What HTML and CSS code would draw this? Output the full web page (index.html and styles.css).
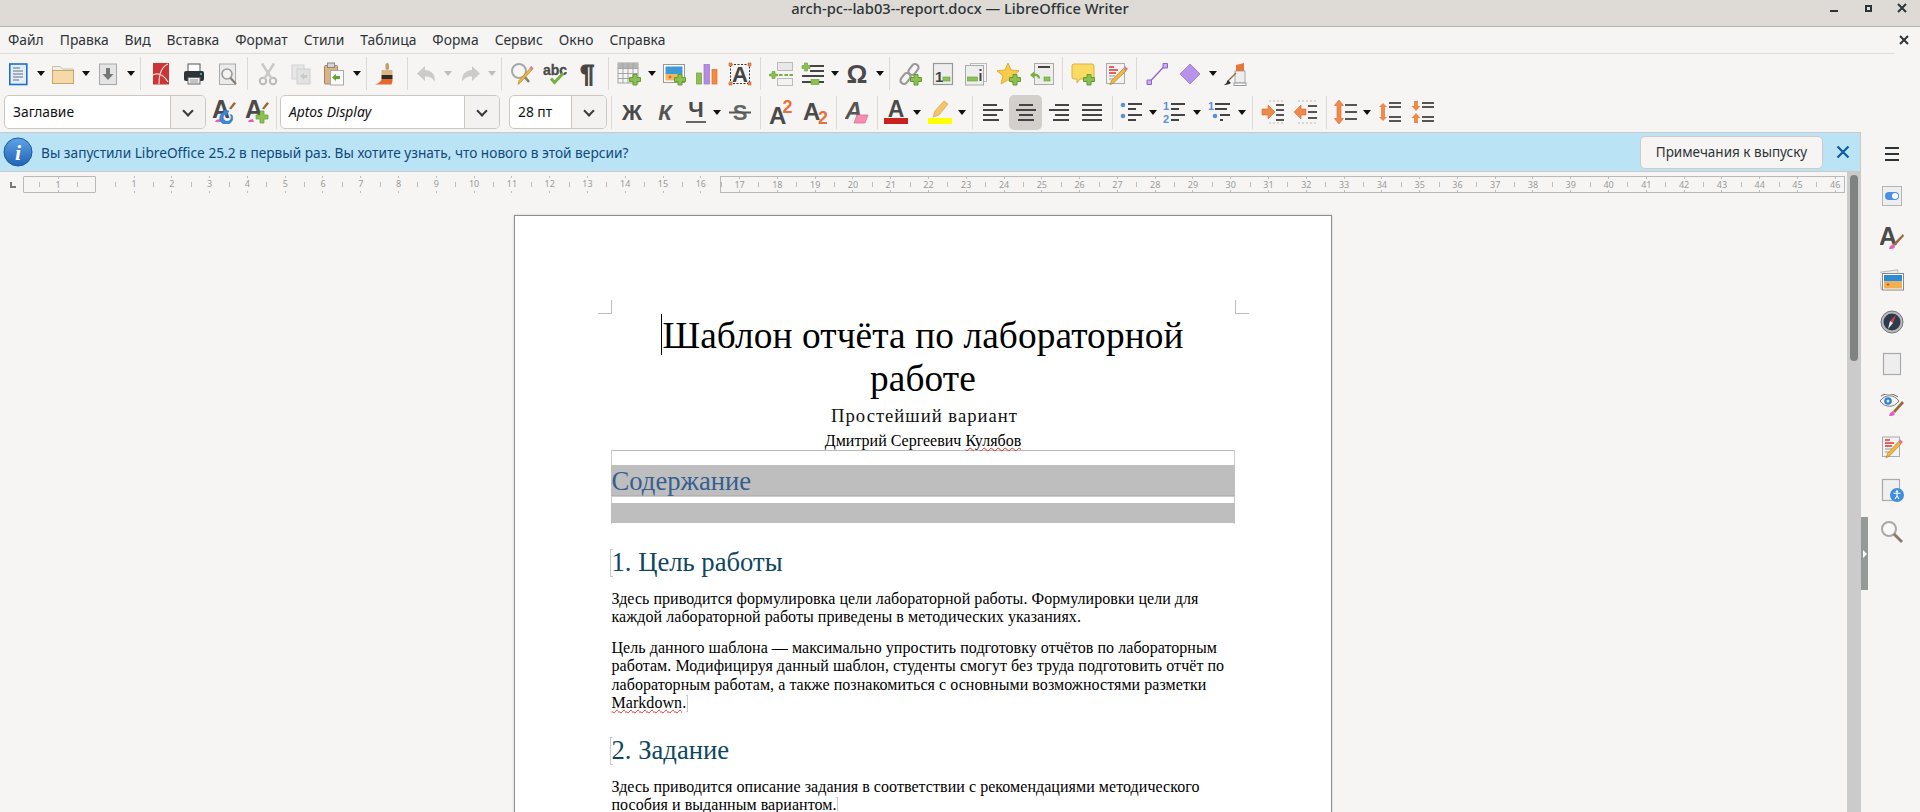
FILE: index.html
```html
<!DOCTYPE html>
<html lang="ru">
<head>
<meta charset="utf-8">
<title>arch-pc--lab03--report.docx — LibreOffice Writer</title>
<link rel="stylesheet" href="styles.css">
</head>
<body>
<svg class="sprite" width="0" height="0">
<defs>
<symbol id="plus" viewBox="0 0 24 24"><path d="M16 12.5h4v3h3.5v4H20v3.5h-4V19.500h-3.500v-4H16z" fill="#8cc152" stroke="#5f9e2f"/></symbol>
<symbol id="new" viewBox="0 0 24 24"><rect x="3.800" y="2" width="17" height="20.500" fill="#e3eefb" stroke="#1a6fd4" stroke-width="1.600"/><path d="M7 6h7M7 9h10M7 12h10M7 15h10M7 18h6" stroke="#8e9aa6" stroke-width="1.300"/></symbol>
<symbol id="open" viewBox="0 0 24 24"><path d="M1.500 9V4.500h8l2 2.500h11v2z" fill="#f1efe9" stroke="#c9c0ae"/><rect x="1.500" y="8.500" width="21" height="13" fill="#f5d9a8" stroke="#c8a56b"/></symbol>
<symbol id="save" viewBox="0 0 24 24"><rect x="3.500" y="2" width="17" height="20.500" fill="#e4e4e4" stroke="#a8a8a8"/><path d="M10 6h4v6h3.500L12 18l-5.500-6H10z" fill="#777"/></symbol>
<symbol id="pdf" viewBox="0 0 24 24"><rect x="4" y="1" width="16" height="21.500" fill="#cc3535"/><path d="M19 2C12 5 10 12 10 22M4 13c5-3 11 0 15 7" fill="none" stroke="#f6d5d5" stroke-width="1.200"/></symbol>
<symbol id="print" viewBox="0 0 24 24"><rect x="6" y="2" width="12" height="8" fill="#fff" stroke="#555"/><rect x="2" y="9" width="20" height="10" rx="2" fill="#2e3436"/><rect x="6" y="15.500" width="12" height="6.500" fill="#eee" stroke="#666"/><rect x="18" y="11" width="2" height="2" fill="#2ab"/><path d="M8 18h8M8 20h8" stroke="#999"/></symbol>
<symbol id="preview" viewBox="0 0 24 24"><rect x="4.500" y="2" width="16" height="20.500" fill="#ebebeb" stroke="#aaa"/><circle cx="12" cy="12" r="5" fill="#f2f2f2" stroke="#9a9a9a" stroke-width="1.600"/><path d="M15.500 16l5.500 6" stroke="#8c7b6c" stroke-width="2.200"/></symbol>
<symbol id="cut" viewBox="0 0 24 24"><circle cx="7" cy="19" r="3.200" fill="none" stroke="#b9b9b9" stroke-width="2"/><circle cx="17" cy="19" r="3.200" fill="none" stroke="#b9b9b9" stroke-width="2"/><path d="M8.500 16.500L18 1.500M15.500 16.500L6 1.500" stroke="#c8c8c8" stroke-width="2.500"/></symbol>
<symbol id="copy" viewBox="0 0 24 24"><rect x="3" y="3" width="12" height="14" fill="#e6e6e6" stroke="#d2d2d2"/><rect x="8" y="7" width="13" height="15" fill="#e2e2e2" stroke="#cfcfcf"/><path d="M11 14l4-3v2h3v3h-3v2z" fill="#c9c9c9"/></symbol>
<symbol id="paste" viewBox="0 0 24 24"><rect x="2.500" y="3.500" width="13" height="18.500" rx="1" fill="#d9b383" stroke="#a9855a"/><rect x="5.500" y="1" width="7" height="4.500" fill="#d5d5d5" stroke="#888"/><rect x="8.500" y="8.500" width="13" height="14.500" fill="#fafafa" stroke="#aaa"/><path d="M10 15.500l4-3.500v2h4v3h-4v2z" fill="#62a82f"/></symbol>
<symbol id="brush" viewBox="0 0 24 24"><rect x="10.500" y="1" width="3.500" height="7" rx="1.700" fill="#c39c6c"/><rect x="6.500" y="8" width="11" height="5" fill="#dcb682"/><rect x="6.500" y="13" width="11" height="4" fill="#2b2b2b"/><path d="M6.500 17h11v2l-1 3.500H0c3-1 5.500-2 6.500-5.500z" fill="#e8662a"/></symbol>
<symbol id="undo" viewBox="0 0 24 24"><path d="M10 4L2 11.500l8 7.500v-4.500c5 0 8 1.500 9.500 5.500C21 13 17 8.500 10 8z" fill="#cbcbcb"/></symbol>
<symbol id="redo" viewBox="0 0 24 24"><path d="M14 4l8 7.500-8 7.500v-4.500c-5 0-8 1.500-9.500 5.500C3 13 7 8.500 14 8z" fill="#cbcbcb"/></symbol>
<symbol id="find" viewBox="0 0 24 24"><circle cx="9" cy="9" r="7" fill="#f6f6f6" stroke="#a8a8a8" stroke-width="2"/><path d="M14 14l5 6" stroke="#8c7b6c" stroke-width="2.500"/><path d="M21.500 8.500L11 20l-3 2.500 1-4L20 6.500z" fill="#f0b840" stroke="#a87a20" stroke-width=".6"/><path d="M19.500 5.500l2-1.500 2 2.500-1.700 2z" fill="#e8709a"/></symbol>
<symbol id="spell" viewBox="0 0 24 24"><text x="0" y="13" class="svgt" font-size="14" font-weight="700" fill="#4a4a4a" stroke="#4a4a4a" stroke-width=".3">abc</text><path d="M8 16.500l3.500 4 9-9.500" fill="none" stroke="#77b041" stroke-width="3"/></symbol>
<symbol id="pil" viewBox="0 0 24 24"><text x="4" y="21" class="svgt" font-size="26" font-weight="700" fill="#444" stroke="#444" stroke-width=".8">¶</text></symbol>
<symbol id="table" viewBox="0 0 24 24"><rect x="1" y="1" width="20" height="20" fill="#f4f4f4" stroke="#a5a5a5"/><rect x="1" y="1" width="20" height="5" fill="#b5b5b5"/><path d="M1 6.500h20M1 11.500h20M1 16.500h20M6 1v20M11 1v20M16 1v20" stroke="#a5a5a5" fill="none"/></symbol>
<symbol id="image" viewBox="0 0 24 24"><rect x="1.500" y="2.500" width="21" height="18" fill="#fff" stroke="#999"/><rect x="3.500" y="4.500" width="17" height="7.500" fill="#3d9ad6"/><rect x="3.500" y="12" width="17" height="6.500" fill="#f0b860"/><path d="M8 13.500v3M6.500 15h3" stroke="#e05020"/></symbol>
<symbol id="chart" viewBox="0 0 24 24"><rect x="1.500" y="11" width="5" height="11" fill="#8cc152" stroke="#6f9f3a" stroke-width=".7"/><rect x="9" y="2.500" width="5.500" height="19.500" fill="#b48de0" stroke="#9b73cc" stroke-width=".7"/><rect x="17" y="7.500" width="5" height="14.500" fill="#f58a3c" stroke="#d96f25" stroke-width=".7"/></symbol>
<symbol id="textbox" viewBox="0 0 24 24"><rect x="2.500" y="2.500" width="19" height="19" fill="none" stroke="#333" stroke-dasharray="2 1.500"/><text x="12" y="20" text-anchor="middle" class="svgt" font-size="22" font-weight="700" fill="#444">A</text><path d="M1 1h3v3H1zM20 1h3v3h-3zM1 20h3v3H1zM20 20h3v3h-3z" fill="#ee8a55" stroke="#cc5a20" stroke-width=".6"/></symbol>
<symbol id="pbreak" viewBox="0 0 24 24"><rect x="8.500" y=".5" width="15" height="8" fill="#e8e8e8" stroke="#bbb"/><rect x="8.500" y="16.500" width="15" height="7" fill="#f2f2f2" stroke="#bbb"/><path d="M3 9.500h3v2.500h2.500v2H6v2.500H3V14H.5v-2H3z" fill="#8cc152" stroke="#5f9e2f" stroke-width=".6"/><path d="M10 13h3.500M15.500 13H19M20.500 13H24" stroke="#77b041" stroke-width="2"/></symbol>
<symbol id="field" viewBox="0 0 24 24"><path d="M9 4h14M9 9h14M1 14h22M1 20h22" stroke="#444" stroke-width="2"/><path d="M3.500 1h3v2.500H9v3H6.500V9h-3V6.500H1v-3h2.500z" fill="#8cc152" stroke="#5f9e2f" stroke-width=".6"/><rect x="10" y="17.500" width="8" height="5" fill="#8cc152" stroke="#5f9e2f" stroke-width=".6"/></symbol>
<symbol id="omega" viewBox="0 0 24 24"><text x="12" y="21" text-anchor="middle" class="svgt" font-size="26" font-weight="700" fill="#4a4a4a">Ω</text></symbol>
<symbol id="link" viewBox="0 0 24 24"><g fill="none" stroke="#9a9a9a" stroke-width="2.200"><rect x="12" y="1.500" width="7" height="12" rx="3.500" transform="rotate(38 15.500 7.500)"/><rect x="4" y="10.500" width="7" height="12" rx="3.500" transform="rotate(38 7.500 16.500)"/></g></symbol>
<symbol id="foot" viewBox="0 0 24 24"><rect x="2.500" y="1.500" width="19" height="21" fill="#eee" stroke="#999" stroke-width="1.200"/><text x="4" y="20" class="svgt" font-size="15" font-weight="700" fill="#444">1</text><rect x="12" y="15" width="7" height="4" fill="#8cc152" stroke="#5f9e2f" stroke-width=".6"/></symbol>
<symbol id="end" viewBox="0 0 24 24"><rect x="6.500" y="1.500" width="16" height="18" fill="#f4f4f4" stroke="#bbb"/><rect x="1.500" y="3.500" width="18" height="19.500" fill="#eee" stroke="#aaa"/><rect x="3.500" y="15" width="10" height="4" fill="#8cc152" stroke="#5f9e2f" stroke-width=".6"/><path d="M16.500 7v2M16.500 11v8" stroke="#444" stroke-width="2"/></symbol>
<symbol id="star" viewBox="0 0 24 24"><path d="M11 1l3 7 8 .8-6 5.200 2 8-7-4.200L4 22l2-8L0 8.800 8 8z" fill="#f8cb4c" stroke="#e0ad2c"/></symbol>
<symbol id="xref" viewBox="0 0 24 24"><rect x="4.500" y="1.500" width="19" height="21" fill="#eee" stroke="#aaa"/><path d="M8 5h12" stroke="#444" stroke-width="2"/><rect x="14" y="15" width="6" height="4" fill="#8cc152" stroke="#5f9e2f" stroke-width=".6"/><path d="M0 13l4-3.500v2c3 0 6 1 6 5h-2c0-2-2-2.500-4-2.500v2.500z" fill="#77b041"/></symbol>
<symbol id="comment" viewBox="0 0 24 24"><path d="M3 2h18a2 2 0 0 1 2 2v11a2 2 0 0 1-2 2H9l-3 4v-4H3a2 2 0 0 1-2-2V4a2 2 0 0 1 2-2z" fill="#fbdc63" stroke="#d9b04a"/></symbol>
<symbol id="track" viewBox="0 0 24 24"><rect x="2.500" y="1.500" width="18" height="20" fill="#f2f2f2" stroke="#aaa"/><path d="M5 5h5M5 8h9M5 11h7" stroke="#d33" stroke-width="1.300"/><path d="M5 14h6M5 17h4" stroke="#999"/><path d="M22 9L10 20.500l-4 2.500 1.500-4.500L19.500 6.500z" fill="#f0b840" stroke="#a87a20" stroke-width=".6"/><path d="M19.500 6l2-1.500 2.500 2.500-2 2z" fill="#e8709a"/></symbol>
<symbol id="line" viewBox="0 0 24 24"><path d="M4.500 20L19.500 4" stroke="#8e63cc" stroke-width="1.300"/><path d="M2 18h4.500v4.500H2zM18 1.500h4.500V6H18z" fill="#c9aef0" stroke="#8e63cc"/></symbol>
<symbol id="diamond" viewBox="0 0 24 24"><path d="M12 2l10 10-10 10L2 12z" fill="#b992ea" stroke="#a882dc"/></symbol>
<symbol id="draw" viewBox="0 0 24 24"><rect x="12" y="9" width="10" height="12" fill="#eee" stroke="#aaa"/><path d="M13 3l8-2v8h-8z" fill="#e8753a"/><rect x="11" y="21" width="12" height="2.500" fill="#fff" stroke="#999"/><path d="M13 11l-9 9" stroke="#8b6c4c" stroke-width="1.300"/><path d="M5 18l3 3c-2 1.500-5 2-7 2 2-1 3-3 4-5z" fill="#333"/></symbol>
<symbol id="updstyle" viewBox="0 0 24 24"><text x="0" y="18" class="svgt" font-size="25" font-weight="700" fill="#4a4a4a">A</text><path d="M22 2l2 1.500-5 6-2-1z" fill="#9a6a3a"/><path d="M4 20l4-1 1 3H3z" fill="#e060c0"/><path d="M20 15a6.500 6.500 0 1 1-8-3l-1-2 6 1-3 5-1-2a4 4 0 1 0 5 .5z" fill="#3c88d8" stroke="#2a6cb8" stroke-width=".5"/></symbol>
<symbol id="newstyle" viewBox="0 0 24 24"><text x="0" y="18" class="svgt" font-size="25" font-weight="700" fill="#4a4a4a">A</text><path d="M22 2l2 1.500-5 6-2-1z" fill="#9a6a3a"/><path d="M4 20l4-1 1 3H3z" fill="#e060c0"/><path d="M15 11h4v4h4v4h-4v4h-4v-4h-4v-4h4z" fill="#8cc152" stroke="#5f9e2f" stroke-width=".7"/></symbol>
<symbol id="bold" viewBox="0 0 24 24"><text x="12" y="20" text-anchor="middle" class="svgt" font-size="22" font-weight="700" fill="#4a4a4a">Ж</text></symbol>
<symbol id="ital" viewBox="0 0 24 24"><text x="12" y="20" text-anchor="middle" class="svgt" font-size="22" font-weight="700" font-style="italic" fill="#555">К</text></symbol>
<symbol id="under" viewBox="0 0 24 24"><text x="12" y="17" text-anchor="middle" class="svgt" font-size="22" font-weight="700" fill="#4a4a4a">Ч</text><path d="M2 22h20" stroke="#666" stroke-width="2"/></symbol>
<symbol id="strike" viewBox="0 0 24 24"><text x="12" y="20" text-anchor="middle" class="svgt" font-size="22" font-weight="700" fill="#666">S</text><path d="M1 12.500h22" stroke="#555" stroke-width="2"/></symbol>
<symbol id="sup" viewBox="0 0 24 24"><text x="0" y="24" class="svgt" font-size="24" font-weight="700" fill="#4a4a4a">A</text><text x="13.500" y="13" class="svgt" font-size="18" font-weight="700" fill="#e8703a">2</text></symbol>
<symbol id="sub" viewBox="0 0 24 24"><text x="0" y="20" class="svgt" font-size="24" font-weight="700" fill="#4a4a4a">A</text><text x="15" y="24" class="svgt" font-size="18" font-weight="700" fill="#e8703a">2</text></symbol>
<symbol id="clear" viewBox="0 0 24 24"><text x="0" y="19" class="svgt" font-size="24" font-weight="700" font-style="italic" fill="#555">A</text><path d="M12 15h11l-3 8H9z" fill="#f48fb1" stroke="#d9658d" stroke-width=".7"/></symbol>
<symbol id="fcolor" viewBox="0 0 24 24"><text x="12" y="17" text-anchor="middle" class="svgt" font-size="23" font-weight="700" fill="#4a4a4a">A</text><rect x="0" y="18" width="24" height="6" fill="#c9211e"/></symbol>
<symbol id="hcolor" viewBox="0 0 24 24"><path d="M16 1l4 3-9 11-6 2 2-6z" fill="#f3c46a" stroke="#d9a040" stroke-width=".7"/><rect x="0" y="18" width="24" height="6" fill="#ffff00"/></symbol>
<symbol id="al" viewBox="0 0 24 24"><path d="M2 5h14M2 10h20M2 15h14M2 20h16" stroke="#444" stroke-width="2.200"/></symbol>
<symbol id="ac" viewBox="0 0 24 24"><path d="M5 5h14M2 10h20M5 15h14M4 20h16" stroke="#444" stroke-width="2.200"/></symbol>
<symbol id="ar" viewBox="0 0 24 24"><path d="M8 5h14M2 10h20M8 15h14M6 20h16" stroke="#444" stroke-width="2.200"/></symbol>
<symbol id="aj" viewBox="0 0 24 24"><path d="M2 5h20M2 10h20M2 15h20M2 20h20" stroke="#444" stroke-width="2.200"/></symbol>
<symbol id="bul" viewBox="0 0 24 24"><circle cx="3" cy="5" r="2.300" fill="#5b8fd6"/><circle cx="3" cy="16" r="2.300" fill="#5b8fd6"/><path d="M8 4h14M8 9h8M8 15h14M8 20h8" stroke="#444" stroke-width="2"/></symbol>
<symbol id="num" viewBox="0 0 24 24"><text x="0" y="10" class="svgt" font-size="11" font-weight="700" fill="#5b8fd6">1</text><text x="0" y="23" class="svgt" font-size="11" font-weight="700" fill="#5b8fd6">2</text><path d="M8 4h14M8 9h8M8 15h14M8 20h8" stroke="#444" stroke-width="2"/></symbol>
<symbol id="outl" viewBox="0 0 24 24"><text x="0" y="10" class="svgt" font-size="11" font-weight="700" fill="#5b8fd6">1</text><circle cx="7" cy="16" r="2.300" fill="#5b8fd6"/><path d="M7 4h15M7 9h12M12 15h10M12 20h3" stroke="#444" stroke-width="2"/></symbol>
<symbol id="indinc" viewBox="0 0 24 24"><path d="M1 9h6V5l7 7-7 7v-4H1z" fill="#f08a4b" stroke="#d9652a" stroke-width=".6"/><path d="M15 5h8M15 10h8M15 15h8M15 20h8" stroke="#555" stroke-width="2"/><path d="M8 1h14M8 23h14" stroke="#bbb" stroke-dasharray="2 2"/></symbol>
<symbol id="inddec" viewBox="0 0 24 24"><path d="M12 9H7V5l-7 7 7 7v-4h5z" fill="#f08a4b" stroke="#d9652a" stroke-width=".6"/><path d="M14 6h9M14 12h9M14 18h9" stroke="#555" stroke-width="2"/><path d="M4 1h18M4 23h18" stroke="#bbb" stroke-dasharray="2 2"/></symbol>
<symbol id="lsp" viewBox="0 0 24 24"><path d="M5 0l4.500 5.500H7v13h2.500L5 24 .5 18.500H3v-13H.5z" fill="#f08a4b" stroke="#d9652a" stroke-width=".6"/><path d="M11 5h12M11 12h12M11 19h12" stroke="#555" stroke-width="2.200"/></symbol>
<symbol id="pinc" viewBox="0 0 24 24"><path d="M5 3L1 7h8zM3 7h4v10H3zM1 17h8l-4 4z" fill="#f08a4b"/><path d="M11 3h12M11 7h12M11 17h12M11 21h12" stroke="#555" stroke-width="2"/></symbol>
<symbol id="pdec" viewBox="0 0 24 24"><path d="M3 1h4v5h2.500L5 11 .5 6H3zM5 13l4.500 5H7v5H3v-5H.5z" fill="#f08a4b"/><path d="M11 3h12M11 7h12M11 17h12M11 21h12" stroke="#555" stroke-width="2"/></symbol>
<symbol id="s-prop" viewBox="0 0 24 24"><rect x="2.500" y="2.500" width="19" height="19" fill="#eee" stroke="#b5b5b5"/><rect x="5" y="8" width="14" height="8" rx="4" fill="#4a90e2"/><circle cx="15" cy="12" r="3" fill="#fff"/></symbol>
<symbol id="s-style" viewBox="0 0 24 24"><text x="-1" y="19" class="svgt" font-size="25" font-weight="700" fill="#4a4a4a">A</text><path d="M24 10l-9 10-2-2 10-10z" fill="#9a6a3a"/><path d="M10 20l4-2 1 3c-1 2-3 2-6 2z" fill="#e060c0"/></symbol>
<symbol id="s-gal" viewBox="0 0 24 24"><rect x="0" y="3" width="19" height="17" fill="#eee" stroke="#bbb" transform="rotate(-8 10 12)"/><rect x="2.500" y="5.500" width="21" height="16.500" fill="#fff" stroke="#888"/><rect x="4" y="7" width="18" height="6.500" fill="#2f8ccc"/><rect x="4" y="13.500" width="18" height="7" fill="#f0b050"/><path d="M8 15v3M6.500 16.500h3" stroke="#e05020"/></symbol>
<symbol id="s-nav" viewBox="0 0 24 24"><circle cx="12" cy="12" r="11" fill="#b9b9b9" stroke="#777"/><circle cx="12" cy="12" r="8.500" fill="#2e3a4e"/><path d="M16 5l-3 8-3-2z" fill="#e04040"/><path d="M8 19l2-8 3 2z" fill="#eee"/></symbol>
<symbol id="s-page" viewBox="0 0 24 24"><rect x="3.500" y="1.500" width="17" height="21" fill="#eee" stroke="#aaa" stroke-width="1.200"/></symbol>
<symbol id="s-insp" viewBox="0 0 24 24"><path d="M0 7c5-7 14-7 19 0-5 7-14 7-19 0z" fill="#f4f4f4" stroke="#777"/><path d="M1 2c5-3 12-3 17 1" fill="none" stroke="#666"/><circle cx="8" cy="7" r="3.800" fill="#2f7fd6"/><circle cx="8" cy="7" r="1.500" fill="#dcecff"/><path d="M24 9l-9 10-2-2 9-10z" fill="#9a6a3a"/><path d="M10 19l3-2 2 3c-1 2-4 2-6 2z" fill="#e060c0"/></symbol>
<symbol id="s-man" viewBox="0 0 24 24"><rect x="2.500" y="1" width="17" height="19.500" fill="#f2f2f2" stroke="#aaa"/><path d="M5 4h5M5 7h9M5 10h7" stroke="#d33" stroke-width="1.300"/><path d="M5 13h7M5 16h4" stroke="#999"/><path d="M21 8L10 19.500 6 22l1.500-4.500L18.500 5.500z" fill="#f0b840" stroke="#a87a20" stroke-width=".6"/><path d="M18.500 5l2-1.500 2.500 2.500-2 2z" fill="#e8709a"/></symbol>
<symbol id="s-acc" viewBox="0 0 24 24"><rect x="2.500" y="1.500" width="17" height="21" fill="#f0f0f0" stroke="#aaa" stroke-width="1.200"/><circle cx="17" cy="17" r="7" fill="#3f8fe0"/><circle cx="17" cy="13.500" r="1.200" fill="#fff"/><path d="M13.500 15.200h7M17 15.500v3M17 18l-2 3M17 18l2 3" stroke="#fff" stroke-width="1.100" fill="none"/></symbol>
<symbol id="s-find" viewBox="0 0 24 24"><circle cx="9" cy="9" r="7" fill="#f8f8f8" stroke="#a8a8a8" stroke-width="2"/><path d="M14 14l8 8" stroke="#8c7b6c" stroke-width="3"/></symbol>
</defs>
</svg>

<header class="titlebar">
  <span class="title">arch-pc--lab03--report.docx — LibreOffice Writer</span>
  <span class="winbtns">
    <span class="wmin"></span>
    <span class="wmax"></span>
    <svg class="wclose" viewBox="0 0 10 10"><path d="M1 1l8 8M9 1l-8 8"/></svg>
  </span>
</header>

<div class="menubar">
  <nav class="menulist">
    <span class="mi">Файл</span><span class="mi">Правка</span><span class="mi">Вид</span><span class="mi">Вставка</span><span class="mi">Формат</span><span class="mi">Стили</span><span class="mi">Таблица</span><span class="mi">Форма</span><span class="mi">Сервис</span><span class="mi">Окно</span><span class="mi">Справка</span>
  </nav>
  <svg class="mclose" viewBox="0 0 10 10"><path d="M1 1l8 8M9 1l-8 8"/></svg>
</div>

<div class="toolbar tb1">
  <span class="b"><svg class="i"><use href="#new"/></svg></span><span class="c"></span>
  <span class="b"><svg class="i"><use href="#open"/></svg></span><span class="c"></span>
  <span class="b"><svg class="i"><use href="#save"/></svg></span><span class="c"></span>
  <span class="s"></span>
  <span class="b"><svg class="i"><use href="#pdf"/></svg></span>
  <span class="b"><svg class="i"><use href="#print"/></svg></span>
  <span class="b"><svg class="i"><use href="#preview"/></svg></span>
  <span class="s"></span>
  <span class="b"><svg class="i"><use href="#cut"/></svg></span>
  <span class="b"><svg class="i"><use href="#copy"/></svg></span>
  <span class="b"><svg class="i"><use href="#paste"/></svg></span><span class="c"></span>
  <span class="s"></span>
  <span class="b"><svg class="i"><use href="#brush"/></svg></span>
  <span class="s"></span>
  <span class="b w30"><svg class="i"><use href="#undo"/></svg></span><span class="c off"></span>
  <span class="b w32"><svg class="i"><use href="#redo"/></svg></span><span class="c off"></span>
  <span class="s"></span>
  <span class="b"><svg class="i"><use href="#find"/></svg></span>
  <span class="b"><svg class="i"><use href="#spell"/></svg></span>
  <span class="b"><svg class="i"><use href="#pil"/></svg></span>
  <span class="s"></span>
  <span class="b"><span class="stack"><svg class="i"><use href="#table"/></svg><svg class="i over"><use href="#plus"/></svg></span></span><span class="c"></span>
  <span class="b"><span class="stack"><svg class="i"><use href="#image"/></svg><svg class="i over"><use href="#plus"/></svg></span></span>
  <span class="b"><svg class="i"><use href="#chart"/></svg></span>
  <span class="b"><svg class="i"><use href="#textbox"/></svg></span>
  <span class="s"></span>
  <span class="b"><svg class="i"><use href="#pbreak"/></svg></span>
  <span class="b w31"><svg class="i"><use href="#field"/></svg></span><span class="c"></span>
  <span class="b"><svg class="i"><use href="#omega"/></svg></span><span class="c"></span>
  <span class="s"></span>
  <span class="b"><span class="stack"><svg class="i"><use href="#link"/></svg><svg class="i over"><use href="#plus"/></svg></span></span>
  <span class="b"><svg class="i"><use href="#foot"/></svg></span>
  <span class="b"><svg class="i"><use href="#end"/></svg></span>
  <span class="b"><span class="stack"><svg class="i"><use href="#star"/></svg><svg class="i over"><use href="#plus"/></svg></span></span>
  <span class="b"><svg class="i"><use href="#xref"/></svg></span>
  <span class="s"></span>
  <span class="b"><span class="stack"><svg class="i"><use href="#comment"/></svg><svg class="i over"><use href="#plus"/></svg></span></span>
  <span class="b"><svg class="i"><use href="#track"/></svg></span>
  <span class="s"></span>
  <span class="b"><svg class="i"><use href="#line"/></svg></span>
  <span class="b"><svg class="i"><use href="#diamond"/></svg></span><span class="c"></span>
  <span class="b"><svg class="i"><use href="#draw"/></svg></span>
</div>

<div class="toolbar tb2">
  <span class="combo cstyle"><span class="ctext">Заглавие</span><span class="cbtn"></span></span>
  <span class="b"><svg class="i"><use href="#updstyle"/></svg></span>
  <span class="b"><svg class="i"><use href="#newstyle"/></svg></span>
  <span class="s sn"></span>
  <span class="combo cfont"><span class="ctext fi">Aptos Display</span><span class="cbtn"></span></span>
  <span class="combo csize"><span class="ctext">28 пт</span><span class="cbtn"></span></span>
  <span class="s"></span>
  <span class="b"><svg class="i"><use href="#bold"/></svg></span>
  <span class="b"><svg class="i"><use href="#ital"/></svg></span>
  <span class="b w30"><svg class="i"><use href="#under"/></svg></span><span class="c"></span>
  <span class="b"><svg class="i"><use href="#strike"/></svg></span>
  <span class="s"></span>
  <span class="b"><svg class="i"><use href="#sup"/></svg></span>
  <span class="b w35"><svg class="i"><use href="#sub"/></svg></span>
  <span class="s"></span>
  <span class="b"><svg class="i"><use href="#clear"/></svg></span>
  <span class="s"></span>
  <span class="b w30"><svg class="i"><use href="#fcolor"/></svg></span><span class="c"></span>
  <span class="b"><svg class="i"><use href="#hcolor"/></svg></span><span class="c"></span>
  <span class="s"></span>
  <span class="b"><svg class="i"><use href="#al"/></svg></span>
  <span class="b active"><svg class="i"><use href="#ac"/></svg></span>
  <span class="b"><svg class="i"><use href="#ar"/></svg></span>
  <span class="b"><svg class="i"><use href="#aj"/></svg></span>
  <span class="s"></span>
  <span class="b w31"><svg class="i"><use href="#bul"/></svg></span><span class="c"></span>
  <span class="b w32"><svg class="i"><use href="#num"/></svg></span><span class="c"></span>
  <span class="b"><svg class="i"><use href="#outl"/></svg></span><span class="c"></span>
  <span class="s"></span>
  <span class="b"><svg class="i"><use href="#indinc"/></svg></span>
  <span class="b"><svg class="i"><use href="#inddec"/></svg></span>
  <span class="s"></span>
  <span class="b w31"><svg class="i"><use href="#lsp"/></svg></span><span class="c"></span>
  <span class="b"><svg class="i"><use href="#pinc"/></svg></span>
  <span class="b"><svg class="i"><use href="#pdec"/></svg></span>
</div>

<div class="workarea">
  <div class="editor">
    <div class="infobar">
      <svg class="infoicon" viewBox="0 0 30 30"><defs><linearGradient id="ig" x1="0" y1="0" x2="0" y2="1"><stop offset="0" stop-color="#5fa4e6"/><stop offset="1" stop-color="#1f63b4"/></linearGradient></defs><circle cx="15" cy="15" r="14" fill="url(#ig)" stroke="#1c5aa5"/><text x="15" y="23" text-anchor="middle" class="infoi">i</text></svg>
      <span class="infotext">Вы запустили LibreOffice 25.2 в первый раз. Вы хотите узнать, что нового в этой версии?</span>
      <button class="infobtn">Примечания к выпуску</button>
      <svg class="infoclose" viewBox="0 0 14 14"><path d="M1.500 1.500l11 11M12.500 1.500l-11 11"/></svg>
    </div>
    <div class="editbody">
      <div class="editmain">
        <div class="ruler">
          <span class="tabcell"><span class="tabmark"></span></span>
          <div class="rbox rleft"><span class="rc">1</span><span class="rc"></span></div>
          <span class="rgap"></span>
          <span class="rc">1</span><span class="rc">2</span><span class="rc">3</span><span class="rc">4</span><span class="rc">5</span><span class="rc">6</span><span class="rc">7</span><span class="rc">8</span><span class="rc">9</span><span class="rc">10</span><span class="rc">11</span><span class="rc">12</span><span class="rc">13</span><span class="rc">14</span><span class="rc">15</span><span class="rc">16</span>
          <div class="rbox rright"><span class="rc">17</span><span class="rc">18</span><span class="rc">19</span><span class="rc">20</span><span class="rc">21</span><span class="rc">22</span><span class="rc">23</span><span class="rc">24</span><span class="rc">25</span><span class="rc">26</span><span class="rc">27</span><span class="rc">28</span><span class="rc">29</span><span class="rc">30</span><span class="rc">31</span><span class="rc">32</span><span class="rc">33</span><span class="rc">34</span><span class="rc">35</span><span class="rc">36</span><span class="rc">37</span><span class="rc">38</span><span class="rc">39</span><span class="rc">40</span><span class="rc">41</span><span class="rc">42</span><span class="rc">43</span><span class="rc">44</span><span class="rc">45</span><span class="rc">46</span></div>
        </div>
        <div class="docarea">
          <article class="page">
            <span class="crop tl"></span>
            <span class="crop tr"></span>
            <h1 class="doctitle"><span class="cursor"></span>Шаблон отчёта по лабораторной работе</h1>
            <p class="subtitle">Простейший вариант</p>
            <p class="author">Дмитрий Сергеевич <span class="sq">Кулябов</span></p>
            <div class="tocframe">
              <div class="tocgray"><span class="tochead">Содержание</span></div>
              <div class="tocgap"></div>
              <div class="tocfill"></div>
            </div>
            <h2 class="hd"><span class="fm"></span>1. Цель работы</h2>
            <p class="para">Здесь приводится формулировка цели лабораторной работы. Формулировки цели для каждой лабораторной работы приведены в методических указаниях.</p>
            <p class="para">Цель данного шаблона — максимально упростить подготовку отчётов по лабораторным работам. Модифицируя данный шаблон, студенты смогут без труда подготовить отчёт по лабораторным работам, а также познакомиться с основными возможностями разметки <span class="sq">Markdown</span>.<span class="fe"></span></p>
            <h2 class="hd h2b"><span class="fm"></span>2. Задание</h2>
            <p class="para">Здесь приводится описание задания в соответствии с рекомендациями методического пособия и выданным вариантом.<span class="fe"></span></p>
          </article>
        </div>
      </div>
      <div class="vscroll"><span class="thumb"></span></div>
    </div>
  </div>
  <aside class="sidebar">
    <span class="handle"></span>
    <div class="burger"><span></span><span></span><span></span></div>
    <span class="sb"><svg class="i"><use href="#s-prop"/></svg></span>
    <span class="sb"><svg class="i"><use href="#s-style"/></svg></span>
    <span class="sb"><svg class="i"><use href="#s-gal"/></svg></span>
    <span class="sb"><svg class="i"><use href="#s-nav"/></svg></span>
    <span class="sb"><svg class="i"><use href="#s-page"/></svg></span>
    <span class="sb"><svg class="i"><use href="#s-insp"/></svg></span>
    <span class="sb"><svg class="i"><use href="#s-man"/></svg></span>
    <span class="sb"><svg class="i"><use href="#s-acc"/></svg></span>
    <span class="sb"><svg class="i"><use href="#s-find"/></svg></span>
  </aside>
</div>
</body>
</html>
```

FILE: styles.css
```css
* { box-sizing: border-box; }
html, body { margin: 0; height: 812px; overflow: hidden; }
body {
  display: flex; flex-direction: column;
  background: #f6f5f4; color: #2e3436;
  font-family: "Noto Sans", "Open Sans", sans-serif; font-size: 13.700px;
}
.sprite { position: absolute; }
.svgt { font-family: "Liberation Sans", sans-serif; }

.titlebar {
  flex: none; height: 27px; background: #dedbd7; border-bottom: 1px solid #b6b3ae;
  display: flex; align-items: center; justify-content: center; position: relative;
}
.title { font-size: 14.700px; font-weight: 500; color: #2e3436; margin-top: -10px; }
.winbtns { position: absolute; right: 0; top: 0; width: 100px; height: 26px; }
.wmin { position: absolute; left: 10px; top: 10px; width: 8px; height: 2px; background: #2e3436; }
.wmax { position: absolute; left: 45px; top: 5px; width: 7px; height: 7px; border: 2px solid #2e3436; }
.wclose { position: absolute; left: 77px; top: 3px; width: 10px; height: 10px; }
.wclose path, .mclose path { stroke: #2e3436; stroke-width: 2; fill: none; }

.menubar { flex: none; height: 27px; display: flex; align-items: center; }
.menulist {
  display: flex; align-items: center; height: 27px; width: 1895px;
  border-bottom: 1px solid #dfdcd8; padding-left: 0;
}
.mi { padding: 0 8px; line-height: 26px; font-size: 13.850px; }
.mclose { width: 10px; height: 10px; margin-left: 4px; margin-top: -1px; }

.toolbar { flex: none; display: flex; align-items: center; height: 39px; padding-left: 1.5px; }
.tb2 { padding-left: 4px; padding-bottom: 1px; }
.b { flex: none; width: 33px; height: 35px; display: flex; align-items: center; justify-content: center; border-radius: 5px; }
.w30 { width: 30px; }
.w31 { width: 31px; }
.w32 { width: 32px; }
.w35 { width: 35px; }
.active { background: #d3cfca; }
.i { width: 24px; height: 24px; display: block; overflow: visible; }
.stack { position: relative; width: 24px; height: 24px; display: block; }
.over { position: absolute; left: 0; top: 0; }
.c { flex: none; width: 12px; height: 20px; display: flex; align-items: center; justify-content: center; }
.c::after { content: ""; border-left: 4px solid transparent; border-right: 4px solid transparent; border-top: 5px solid #111; }
.c.off::after { border-top-color: #bdbdbd; }
.s { flex: none; width: 8px; height: 33px; display: flex; justify-content: center; }
.s::after { content: ""; width: 1px; background: #dcd9d5; }
.sn { width: 7px; }

.combo {
  flex: none; height: 34px; display: flex; background: #fff;
  border: 1px solid #cdc7c2; border-radius: 5px; overflow: hidden;
}
.cstyle { width: 202px; margin-right: 1px; }
.cfont { width: 220px; margin-right: 9px; }
.csize { width: 98px; }
.ctext { flex: 1; padding-left: 8px; line-height: 32px; font-size: 13.800px; color: #111; white-space: nowrap; }
.fi { font-style: italic; }
.cbtn {
  flex: none; width: 35px; border-left: 1px solid #cdc7c2; background: #f3f2f0;
  display: flex; align-items: center; justify-content: center;
}
.cbtn::after {
  content: ""; width: 6px; height: 6px; border-right: 2px solid #3a3a3a; border-bottom: 2px solid #3a3a3a;
  transform: rotate(45deg); margin-top: -3px;
}

.workarea { flex: 1; display: flex; min-height: 0; }
.editor { flex: none; width: 1861px; display: flex; flex-direction: column; }
.infobar {
  flex: none; height: 40px; background: #bbe3f6; display: flex; align-items: center;
  border-top: 1px solid #c9c9c9; border-bottom: 1px solid #c9c9c9; border-right: 1px solid #c9c9c9;
  padding-left: 3px;
}
.infoicon { width: 30px; height: 30px; flex: none; }
.infoi { font-family: "Liberation Serif", serif; font-style: italic; font-weight: 700; font-size: 22px; fill: #fff; }
.infotext { margin-left: 8px; flex: 1; color: #0f4a7a; font-size: 13.700px; white-space: nowrap; }
.infobtn {
  flex: none; width: 183px; height: 33px; margin-right: 13px; padding: 0;
  border: 1px solid #cfcac5; border-radius: 5px; background: #f6f5f4; color: #2e3436;
  font: inherit; font-size: 13.500px;
}
.infoclose { width: 14px; height: 14px; flex: none; margin-right: 10px; }
.infoclose path { stroke: #0e5a9b; stroke-width: 2.200; fill: none; }

.editbody { flex: 1; display: flex; min-height: 0; }
.editmain { flex: 1; display: flex; flex-direction: column; min-width: 0; }
.ruler { flex: none; height: 24px; padding-top: 4px; display: flex; align-items: flex-start; }
.tabcell { flex: none; width: 22.500px; height: 17px; position: relative; }
.tabmark { position: absolute; left: 10px; top: 6px; width: 6px; height: 6px; border-left: 2px solid #777; border-bottom: 2px solid #777; }
.rbox { flex: none; height: 17px; display: flex; border: 1px solid #b9b9b9; overflow: hidden; }
.rleft { width: 73.800px; padding-left: 15.800px; border-radius: 1px; }
.rgap { flex: none; width: 18.900px; }
.rright { width: 1125px; }
.rc {
  flex: none; width: 37.795px; height: 17px; text-align: center; line-height: 16px;
  font-family: "Noto Sans", sans-serif; font-size: 9px; color: #9a9a9a;
  background:
    linear-gradient(#bbb, #bbb) 0 50% / 1px 5px no-repeat,
    linear-gradient(#bbb, #bbb) 50% 0 / 1px 2px no-repeat,
    linear-gradient(#bbb, #bbb) 50% 100% / 1px 2px no-repeat;
}
.rbox .rc { height: 15px; line-height: 15px; }

.docarea { flex: 1; min-height: 0; display: flex; justify-content: center; padding: 19px 2px 0 0; overflow: hidden; }
.page {
  flex: none; width: 818px; height: 1056px; position: relative; background: #fff;
  border: 1px solid #8f8f8f; padding: 98px 96px 0 97px; box-shadow: 0 0 2px #c8c8c8;
  font-family: "Liberation Serif", serif; color: #000;
}
.crop { position: absolute; top: 84px; width: 14px; height: 14px; border-bottom: 1px solid #bdbdbd; }
.tl { left: 83px; border-right: 1px solid #bdbdbd; }
.tr { right: 82px; border-left: 1px solid #bdbdbd; }
.doctitle { margin: 0; font-size: 37.330px; line-height: 43px; font-weight: 400; text-align: center; letter-spacing: .1px; }
.cursor { display: inline-block; width: 0; height: 41px; border-left: 1px solid #000; vertical-align: -7px; margin-left: -1px; }
.subtitle { margin: 5px 0 0; padding-left: 3px; font-size: 18.670px; line-height: 21.500px; letter-spacing: 1px; text-align: center; color: #111; }
.author { margin: 5px 0 0; font-size: 16px; line-height: 18px; text-align: center; }
.sq { text-decoration: underline wavy #e0312c 1px; text-underline-offset: 1px; }
.tocframe { margin: 0 0 0 -1px; width: 624px; height: 74px; border-top: 1px solid #bbb; border-left: 1px solid #ccc; border-right: 1px solid #ccc; padding-top: 14px; }
.tocgray { height: 31px; background: #bebebe; border-bottom: 1px solid #b3b3b3; line-height: 32px; margin: 0 -1px; padding-left: 1px; }
.tochead { font-size: 26.670px; color: #365f91; }
.tocgap { height: 7px; border-top: 1px solid #ccc; background: #fff; }
.tocfill { height: 20px; background: #bebebe; margin: 0 -1px; }
.hd { margin: 23px 0 0; font-size: 26.670px; line-height: 30.600px; font-weight: 400; color: #0f4761; position: relative; }
.fm { position: absolute; left: -2px; top: 2px; width: 3px; height: 28px; border: 1px solid #c9c9c9; border-right: 0; }
.fe { display: inline-block; width: 2px; height: 17px; border: 1px solid #c9c9c9; border-left: 0; vertical-align: -4px; }
.para { margin: 12.300px 0 0; font-size: 16px; line-height: 18.300px; letter-spacing: .05px; }
.hd + .para { margin-top: 13px; }
.h2b + .para { margin-top: 12px; }

.vscroll { flex: none; width: 14px; background: #cbcbcb; padding: 3px 3px 0; }
.thumb { display: block; width: 8px; height: 186px; background: #7f8382; border-radius: 4px; }

.sidebar { flex: 1; position: relative; display: flex; flex-direction: column; align-items: center; padding-left: 3px; }
.handle { position: absolute; left: 0; top: 385px; width: 7px; height: 73px; background: #959a99; display: flex; align-items: center; justify-content: center; }
.handle::after { content: ""; border-left: 4px solid #fff; border-top: 4px solid transparent; border-bottom: 4px solid transparent; }
.burger { flex: none; height: 43px; display: flex; flex-direction: column; justify-content: center; gap: 4px; width: 14px; }
.burger span { display: block; height: 2px; background: #2e3436; }
.sb { flex: none; height: 42px; display: flex; align-items: center; justify-content: center; }
```
